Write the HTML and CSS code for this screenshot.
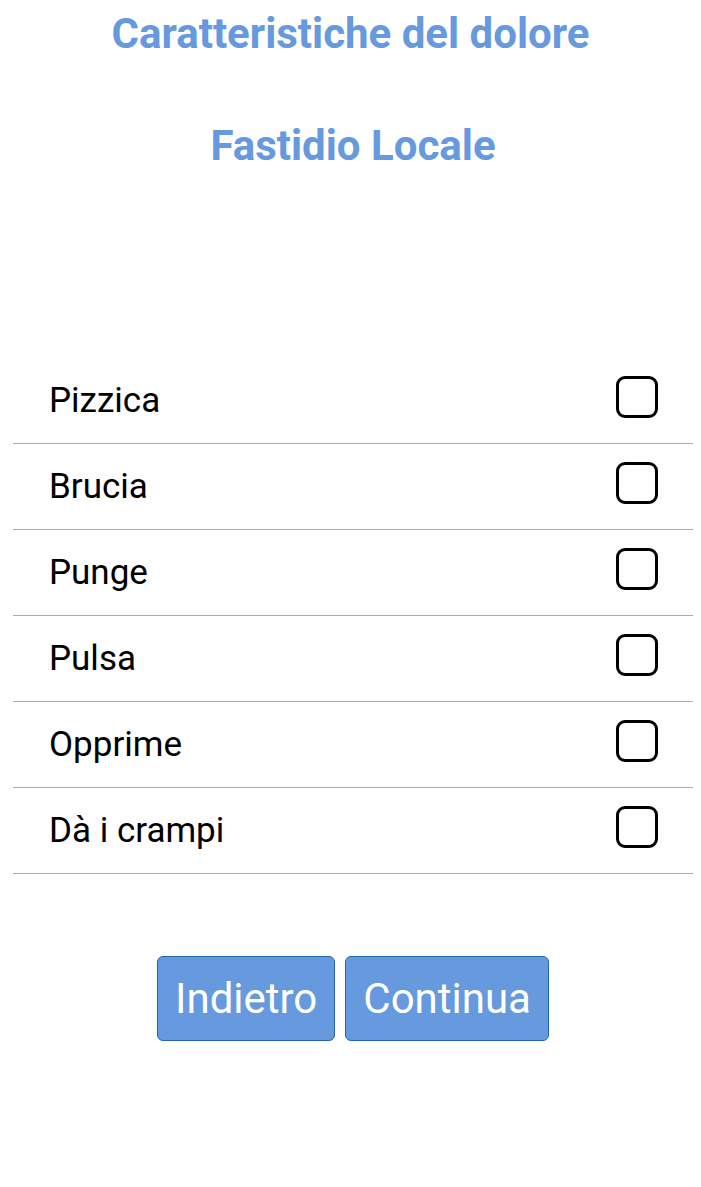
FILE: index.html
```html
<!DOCTYPE html>
<html lang="it">
<head>
<meta charset="utf-8">
<title>Caratteristiche del dolore</title>
<link rel="stylesheet" href="styles.css">
</head>
<body>
<main class="page">
  <h1 class="title">Caratteristiche del dolore</h1>
  <h2 class="subtitle">Fastidio Locale</h2>
  <ul class="list">
    <li class="row"><span class="label">Pizzica</span><span class="check"></span></li>
    <li class="row"><span class="label">Brucia</span><span class="check"></span></li>
    <li class="row"><span class="label">Punge</span><span class="check"></span></li>
    <li class="row"><span class="label">Pulsa</span><span class="check"></span></li>
    <li class="row"><span class="label">Opprime</span><span class="check"></span></li>
    <li class="row"><span class="label">Dà i crampi</span><span class="check"></span></li>
  </ul>
  <div class="actions">
    <button class="btn btn-back">Indietro</button>
    <button class="btn btn-next">Continua</button>
  </div>
</main>
</body>
</html>
```
FILE: styles.css
```css
html, body {
  margin: 0;
  padding: 0;
  background: #fefefe;
}
body {
  font-family: Roboto, "Liberation Sans", sans-serif;
  color: #000;
}
.page {
  display: flex;
  flex-direction: column;
}
.title, .subtitle {
  margin: 0;
  text-align: center;
  font-weight: 700;
  font-size: 42px;
  line-height: 48px;
  color: #6699dd;
}
.title {
  padding-top: 10px;
}
.subtitle {
  margin-top: 64px;
  margin-left: 5px;
}
.list {
  list-style: none;
  margin: 188px 8px 0 13px;
  padding: 0;
}
.row {
  display: flex;
  align-items: center;
  justify-content: space-between;
  height: 85px;
  border-bottom: 1px solid #aaaaaa;
  padding: 0 35px 0 36px;
}
.label {
  font-size: 35px;
  line-height: 40px;
  padding-top: 1px;
}
.check {
  box-sizing: border-box;
  width: 42px;
  height: 42px;
  border: 3.5px solid #000;
  border-radius: 9px;
  margin-top: -8px;
}
.actions {
  display: flex;
  justify-content: center;
  gap: 10px;
  margin-top: 82px;
  padding-left: 5px;
}
.btn {
  box-sizing: border-box;
  height: 85px;
  padding: 0 17px;
  background: #6699dd;
  border: 1px solid #2266aa;
  border-radius: 6px;
  color: #fff;
  font-family: Roboto, "Liberation Sans", sans-serif;
  font-size: 42px;
}
```
